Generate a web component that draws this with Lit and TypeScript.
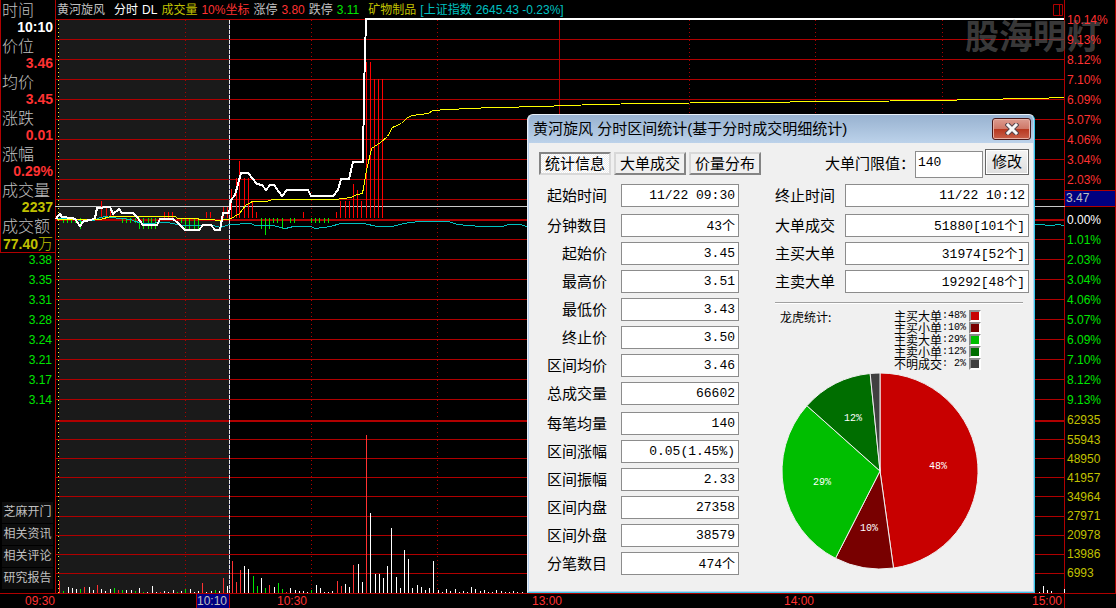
import { LitElement, html, svg, css } from "lit";
import { customElement, state } from "lit/decorators.js";
import { classMap } from "lit/directives/class-map.js";

type Bar = [x: number, y: number, colour?: string];
type Field = { id: string; label: string; value: string; spaced?: boolean };

const range = (from: number, to: number, step: number) => {
  const out: number[] = [];
  for (let v = from; v <= to; v += step) out.push(v);
  return out;
};

/* Price pane and volume pane, in chart units */
const PRICE_GRID = [...range(39, 199, 20), ...range(239, 399, 20)];
const VOLUME_GRID = [439, 458, 477, 496, 516, 535, 554, 573];
const DOTTED = [185, 311, 437, 689, 815, 942];

const PRICE =
  "56,219 58,216 60,214 62,217 72,218 75,219 80,226 84,221 91,220 95,218 97,208 110,207 113,214 119,209 122,213 133,213 137,217 143,225 157,225 160,219 173,219 178,223 185,230 199,230 203,225 211,225 215,230 220,230 223,213 229,213 231,200 235,195 241,173 248,173 257,184 262,185 266,190 270,185 274,185 282,196 287,190 308,190 311,196 333,196 338,190 341,179 349,179 353,162 363,162 364,91 365,55 366,19 1064,19";
const AVERAGE =
  "56,219 100,219 110,216 175,216 177,218 197,218 199,219 213,219 216,220 229,219 234,216 239,213 245,205 252,201 266,201 272,199 335,199 350,197 357,194 362,193 366,170 371,148 380,142 387,136 392,127 401,123 407,117 412,115 428,113 432,110 448,109 469,108 493,107 545,106 562,105 640,103 940,100 974,99 1033,98 1064,97";
const INDEX =
  "56,218 67,218 76,219 82,221 93,220 100,217 105,216 110,217 130,219 135,221 143,223 167,222 182,225 203,225 213,225 220,227 229,224 250,223 255,225 272,225 285,228 293,226 310,226 315,228 330,226 340,223 363,223 377,226 392,226 403,223 418,221 448,221 457,224 480,226 502,226 508,224 520,224 526,226 1035,224 1043,224 1046,225 1053,225 1056,224 1064,225";

const BUY: Bar[] = [
  [101, 201], [106, 208], [110, 208], [113, 214], [164, 212], [168, 212], [172, 212], [206, 212], [210, 212],
  [223, 207], [227, 207], [231, 189], [236, 178], [239, 161], [244, 178], [248, 178], [252, 201], [256, 212],
  [303, 212], [336, 212], [340, 201], [345, 201], [349, 201], [353, 184], [357, 190], [361, 201],
  [366, 62], [370, 62], [374, 79], [378, 79], [382, 79],
];
const SELL: Bar[] = [
  [63, 223], [67, 223], [71, 223], [75, 223], [80, 229], [122, 223], [126, 223], [130, 223], [135, 223],
  [139, 229], [143, 229], [148, 229], [151, 229], [155, 229], [181, 223], [185, 229], [189, 229], [194, 229],
  [198, 229], [261, 229], [265, 235], [269, 229], [273, 223], [277, 223], [282, 229], [290, 223], [294, 223],
  [311, 223], [315, 223], [319, 223], [324, 223], [328, 223],
];
const VOLUME: Bar[] = [
  [59, 581, "r"], [63, 591, "g"], [68, 587], [72, 588], [76, 589], [80, 589, "g"], [84, 587, "r"], [89, 587],
  [93, 590], [97, 585, "r"], [101, 589], [105, 591], [110, 589], [114, 588, "g"], [118, 590, "r"], [122, 590, "g"],
  [126, 590], [131, 590], [135, 591, "g"], [139, 588], [143, 592, "g"], [147, 592], [152, 586], [156, 592],
  [160, 592, "r"], [164, 591], [168, 592], [173, 590], [177, 592, "g"], [181, 591], [185, 589, "g"], [190, 589],
  [194, 592], [198, 591], [202, 583, "r"], [206, 592], [211, 591], [215, 590, "g"], [219, 591], [223, 578, "r"],
  [227, 586], [232, 561, "r"], [236, 582, "r"], [240, 570, "r"], [244, 566], [248, 569], [253, 576, "g"],
  [257, 586, "g"], [261, 578], [265, 588, "g"], [269, 585, "r"], [274, 587], [278, 583, "g"], [282, 589, "g"],
  [286, 592, "r"], [290, 588], [295, 590], [299, 591], [303, 591], [307, 592], [311, 590, "g"], [316, 585],
  [320, 588], [324, 592], [328, 592], [332, 591], [337, 581, "r"], [341, 586, "r"], [345, 584], [349, 587],
  [353, 565, "r"], [358, 564], [362, 582], [366, 435, "r"], [370, 513], [375, 574], [379, 574], [383, 578],
  [387, 566], [391, 528], [396, 577], [400, 588], [404, 550], [408, 559], [412, 588], [417, 585], [421, 587],
  [425, 590], [429, 588], [433, 561], [438, 590], [442, 592], [446, 589], [450, 591], [455, 589], [459, 592],
  [463, 591], [467, 592], [471, 587], [475, 589], [480, 591], [484, 590], [488, 592], [492, 592], [496, 590],
  [501, 591], [505, 592], [509, 592], [513, 591], [517, 592], [522, 592], [1039, 592], [1043, 586], [1047, 590],
  [1051, 591], [1064, 589],
];

@customElement("time-chart")
class TimeChart extends LitElement {
  static styles = css`
    :host { display: block; }
    .plot { display: block; width: 100%; height: 575px; overflow: visible; shape-rendering: crispEdges; }
    .plot line, .plot polyline { vector-effect: non-scaling-stroke; fill: none; }
    .shade { fill: #1a1a1a; }
    .grid { stroke: #b00000; stroke-width: 1; }
    .thick { stroke: #b00000; stroke-width: 2; }
    .dots { stroke: #b00000; stroke-dasharray: 1 3; }
    .open { stroke: #ffff32; stroke-dasharray: 1 3; }
    .cross { stroke: #c8c8c8; }
    .cross-base { stroke: #2a2a80; }
    .cross-dash { stroke: #e8e8e8; stroke-dasharray: 4 1; }
    .price { stroke: #ffffff; stroke-width: 2; }
    .average { stroke: #ffff00; }
    .index { stroke: #00c0c0; }
    .buy { stroke: #ff0000; }
    .sell { stroke: #00e600; }
    .w { stroke: #ffffff; }
    .r { stroke: #ff3232; }
    .g { stroke: #00e600; }
  `;

  private h(y: number, cls = "grid") {
    return svg`<line class=${cls} x1="55" x2="1065" y1=${y + 0.5} y2=${y + 0.5} />`;
  }

  private v(x: number, cls: string, from = 20, to = 593) {
    return svg`<line class=${cls} x1=${x + 0.5} x2=${x + 0.5} y1=${from} y2=${to} />`;
  }

  render() {
    return html`
      <svg class="plot" viewBox="55 19 1010 575" preserveAspectRatio="none" role="img" aria-label="分时走势">
        <rect class="shade" x="59" y="20" width="170" height="573" />
        ${this.h(19)} ${PRICE_GRID.map((y) => this.h(y))} ${VOLUME_GRID.map((y) => this.h(y))} ${this.h(593)}
        <line class="thick" x1="55" x2="1065" y1="220" y2="220" />
        <line class="thick" x1="55" x2="1065" y1="421" y2="421" />
        ${DOTTED.map((x) => this.v(x, "dots"))}
        ${this.v(559, "grid")} ${this.v(55, "grid", 0)} ${this.v(1064, "grid", 0)} ${this.v(58, "open")}
        ${this.h(206, "cross")}
        ${this.v(229, "cross-base")} ${this.v(229, "cross-dash")}
        ${BUY.map(([x, y]) => this.v(x, "buy", y, 218))}
        ${SELL.map(([x, y]) => this.v(x, "sell", 218, y))}
        ${VOLUME.map(([x, y, c]) => this.v(x, c ?? "w", y))}
        <g transform="translate(0.5 0.5)">
          <polyline class="index" points=${INDEX} />
          <polyline class="average" points=${AVERAGE} />
        </g>
        <polyline class="price" points=${PRICE} />
      </svg>
    `;
  }
}

const LEFT_FIELDS: Field[] = [
  { id: "start", label: "起始时间", value: "11/22 09:30", spaced: true },
  { id: "minutes", label: "分钟数目", value: "43个" },
  { id: "open", label: "起始价", value: "3.45" },
  { id: "high", label: "最高价", value: "3.51" },
  { id: "low", label: "最低价", value: "3.43" },
  { id: "close", label: "终止价", value: "3.50" },
  { id: "mean", label: "区间均价", value: "3.46" },
  { id: "volume", label: "总成交量", value: "66602", spaced: true },
  { id: "per", label: "每笔均量", value: "140" },
  { id: "rise", label: "区间涨幅", value: "0.05(1.45%)" },
  { id: "swing", label: "区间振幅", value: "2.33" },
  { id: "inner", label: "区间内盘", value: "27358" },
  { id: "outer", label: "区间外盘", value: "38579" },
  { id: "ticks", label: "分笔数目", value: "474个" },
];

const RIGHT_FIELDS: Field[] = [
  { id: "end", label: "终止时间", value: "11/22 10:12", spaced: true },
  { id: "big", label: "大单成交", value: "51880[101个]" },
  { id: "bigbuy", label: "主买大单", value: "31974[52个]" },
  { id: "bigsell", label: "主卖大单", value: "19292[48个]" },
];

const SLICES = [
  { name: "主买大单", share: 47.8, text: "48%", colour: "#c80000", x: 156, y: 93 },
  { name: "主买小单", share: 9.7, text: "10%", colour: "#780000", x: 87, y: 155 },
  { name: "主卖大单", share: 29.1, text: "29%", colour: "#00be00", x: 40, y: 109 },
  { name: "主卖小单", share: 11.8, text: "12%", colour: "#006e00", x: 71, y: 45 },
  { name: "不明成交", share: 1.6, text: "\u00a02%", colour: "#404040", x: 0, y: 0 },
];

@customElement("stat-dialog")
class StatDialog extends LitElement {
  @state() private tab = 0;

  static styles = css`
    :host { display: block; color: #000; font-family: "Liberation Mono", "Noto Sans CJK SC", monospace; }
    .window { border: 1px solid; border-color: #e8f0f8 #38c8e8 #38c8e8 #e8f0f8; border-radius: 6px 6px 0 0; background: #f0f0f0; }
    .frame { border: 1px solid #b8d2ee; border-top: 0; border-radius: 5px 5px 0 0; overflow: hidden; }
    .title { display: flex; justify-content: space-between; align-items: center; height: 28px; padding: 0 2px 0 4px;
      background: linear-gradient(#98b2d0, #bcd2ea); }
    .title h2 { margin: 0; font: 15px/28px "Liberation Sans", "Noto Sans CJK SC", sans-serif; white-space: nowrap; }
    .close { display: flex; align-items: center; justify-content: center; width: 39px; height: 22px; padding: 0;
      border: 1px solid #4a1818; border-radius: 3px; box-shadow: inset 0 0 0 1px #e8b0a4;
      background: linear-gradient(#dc9c90, #cf7868 48%, #b83820 52%, #c8604a); }
    .body { padding: 6px 4px 11px 10px; }
    .tools { display: flex; align-items: flex-start; justify-content: space-between; height: 35px; }
    .tabs { display: flex; gap: 3px; padding-top: 3px; }
    .tab { width: 72px; height: 23px; padding: 0 0 2px; border: 2px outset #d8d8d8; background: #f0f0f0; color: #000;
      font: 15px/17px "Noto Sans CJK SC", sans-serif; }
    .tab.on { border-style: inset; background: repeating-conic-gradient(#ffffff 0 25%, #eeeeee 0 50%) 0 0 / 2px 2px; }
    .limit { display: flex; align-items: flex-start; font: 15px/27px "Noto Sans CJK SC", sans-serif; }
    .limit .value { width: 68px; height: 27px; margin: 2px 2px 0 0; padding: 0 2px 4px; text-align: left; }
    .apply { width: 44px; height: 26px; padding: 0 0 2px; border: 1px solid #666; box-shadow: inset 0 0 0 1px #fff;
      background: linear-gradient(#f4f4f4, #dedede); color: #000; font: 15px/20px "Noto Sans CJK SC", sans-serif; }
    .columns { display: flex; gap: 36px; }
    .left { width: 200px; }
    .right { flex: 1; min-width: 0; }
    .field { display: flex; height: 23px; margin-bottom: 5px; }
    .field.spaced { margin-bottom: 7px; }
    .field label { flex: none; font: 15px/21px "Noto Sans CJK SC", sans-serif; }
    .left .field { gap: 14px; }
    .left .field label { width: 68px; text-align: right; }
    .right .field { gap: 10px; }
    .value { box-sizing: border-box; flex: 1; min-width: 0; height: 23px; margin: 0; padding: 0 3px; border: 1px solid #8c8c8c;
      border-radius: 0; background: #fff; color: #000; font: 13px/19px "Liberation Mono", "Noto Sans CJK SC", monospace;
      text-align: right; }
    .value.counted { padding-bottom: 2px; }
    .rule { height: 0; margin: 9px 6px 6px 0; border: 0; border-top: 1px solid #a0a0a0; border-bottom: 1px solid #fff; }
    .share { display: flex; justify-content: space-between; padding: 0 48px 0 5px; font: 12px/14px "Noto Sans CJK SC", sans-serif; }
    .legend { margin: 0; padding: 0; list-style: none; }
    .legend li { display: flex; align-items: center; height: 12px; white-space: nowrap; }
    .pct { font: 10px/12px "Liberation Mono", monospace; }
    .swatch { box-sizing: border-box; width: 12px; height: 12px; margin-left: 3px; border: 2px solid;
      border-color: #8c8c8c #fff #fff #8c8c8c; }
    .pie { display: block; width: 196px; height: 196px; margin: 3px 0 0 7px; overflow: visible; }
    .pie path { stroke: #f0f0f0; stroke-width: 1; }
    .pie text { fill: #fff; font: 10px "Liberation Mono", monospace; text-anchor: middle; dominant-baseline: central; }
  `;

  private field(f: Field) {
    return html`
      <div class=${classMap({ field: true, spaced: !!f.spaced })}>
        <label for=${f.id}>${f.label}</label>
        <input class=${classMap({ value: true, counted: f.value.includes("个") })} id=${f.id} readonly .value=${f.value} />
      </div>
    `;
  }

  private pie() {
    const c = 98;
    const r = 98;
    let sum = 0;
    const at = (share: number) => {
      const a = (share / 100) * 2 * Math.PI;
      return `${(c + r * Math.sin(a)).toFixed(2)} ${(c - r * Math.cos(a)).toFixed(2)}`;
    };
    return SLICES.map((s) => {
      const from = at(sum);
      sum += s.share;
      return svg`<path fill=${s.colour} d=${`M${c} ${c} L${from} A${r} ${r} 0 0 1 ${at(sum)} Z`} />`;
    });
  }

  render() {
    return html`
      <section class="window" role="dialog" aria-labelledby="title">
        <div class="frame">
          <header class="title">
            <h2 id="title">黄河旋风 分时区间统计(基于分时成交明细统计)</h2>
            <button class="close" aria-label="关闭">
              <svg width="14" height="12" viewBox="0 0 14 12">
                <path d="M3 2 L11 10 M11 2 L3 10" stroke="#56444c" stroke-width="5" stroke-linecap="square" />
                <path d="M3 2 L11 10 M11 2 L3 10" stroke="#f8f8f8" stroke-width="3" stroke-linecap="square" />
              </svg>
            </button>
          </header>
          <div class="body">
            <div class="tools">
              <div class="tabs">
                ${["统计信息", "大单成交", "价量分布"].map(
                  (t, i) => html`<button class=${classMap({ tab: true, on: this.tab === i })}
                    @click=${() => (this.tab = i)}>${t}</button>`
                )}
              </div>
              <div class="limit">
                <label for="limit">大单门限值：</label>
                <input class="value" id="limit" value="140" />
                <button class="apply">修改</button>
              </div>
            </div>
            <div class="columns">
              <div class="left">${LEFT_FIELDS.map((f) => this.field(f))}</div>
              <div class="right">
                ${RIGHT_FIELDS.map((f) => this.field(f))}
                <hr class="rule" />
                <div class="share">
                  <span>龙虎统计:</span>
                  <ul class="legend">
                    ${SLICES.map(
                      (s) => html`<li>${s.name}<span class="pct">:${s.text}</span>
                        <span class="swatch" style="background:${s.colour}"></span></li>`
                    )}
                  </ul>
                </div>
                <svg class="pie" viewBox="0 0 196 196" role="img" aria-label="龙虎统计">
                  ${this.pie()}
                  ${SLICES.filter((s) => s.x).map((s) => svg`<text x=${s.x} y=${s.y}>${s.text}</text>`)}
                </svg>
              </div>
            </div>
          </div>
        </div>
      </section>
    `;
  }
}

@customElement("app-root")
class AppRoot extends LitElement {
  static styles = css`
    :host { display: block; position: relative; min-height: 100vh; overflow: hidden; background: #000; color: #c0c0c0;
      font: 12px/14px "Liberation Sans", "Noto Sans CJK SC", sans-serif; }
    .shell { display: grid; grid-template-columns: 55px 1fr 51px; grid-template-rows: 19px auto 14px; }
    .side { grid-row: 1 / 3; display: flex; flex-direction: column; border-bottom: 1px solid #b00000; }
    .quote { margin: 0; border: solid #b00000; border-width: 0 0 1px 1px; }
    .quote dt, .quote dd { height: 18px; margin: 0; white-space: nowrap; }
    .quote dt { padding-left: 1px; font: 300 16px/18px "Noto Sans CJK SC", sans-serif; }
    .quote dd { padding-right: 2px; font-weight: bold; font-size: 14px; line-height: 18px; text-align: right; }
    .unit { font: 300 15px/18px "Noto Sans CJK SC", sans-serif; }
    .prices { display: flex; flex-direction: column; gap: 8px; padding: 1px 3px 0 0; line-height: 12px; text-align: right; }
    .links { display: flex; flex-direction: column; gap: 1px; margin: auto 2px 4px; }
    .links button { height: 21px; padding: 0 0 4px; border: 0; background: #0d0d0d; color: #c0c0c0;
      font: 12px/16px "Noto Sans CJK SC", sans-serif; white-space: nowrap; }
    .head { display: flex; align-items: center; gap: 4px; padding: 0 2px; white-space: nowrap; }
    .gap { margin-left: 5px; }
    .pane { margin-left: auto; }
    .scale { position: relative; z-index: 1; grid-column: 3; grid-row: 1 / 3; border: solid #b00000; border-width: 0 1px 1px 0;
      padding: 10px 0 0 2px; }
    .tick { height: 20px; line-height: 20px; }
    .vol { height: 19px; line-height: 19px; color: #c0c000; }
    .vol.first { height: 21px; line-height: 21px; }
    .tag { box-sizing: border-box; height: 17px; margin: 0 0 3px -2px; padding-left: 1px; border: solid #b00000; border-width: 1px 0;
      background: #000080; line-height: 15px; }
    .times { grid-column: 1 / 4; display: grid; grid-template-columns: 55px 141fr 81fr 255fr 252fr 248fr 33px 51px;
      color: #ff3232; line-height: 14px; }
    .first-time { text-align: right; }
    .now { grid-column: 3; justify-self: start; width: 32px; border: solid #b00000; border-width: 0 1px; background: #000080;
      color: #c0c0c0; }
    .t1030 { grid-column: 4; }
    .close-line { grid-column: 7; border-right: 1px solid #b00000; }
    .red { color: #ff3232; }
    .green { color: #00e600; }
    .white { color: #fff; }
    .yellow { color: #c0c000; }
    .cyan { color: #00c0c0; }
    .mark { position: absolute; top: 11px; right: 15px; color: rgb(90 90 90 / 65%); pointer-events: none;
      font: bold 34px/48px "Noto Sans CJK SC", sans-serif; }
    .dialog { position: absolute; top: 114px; left: 527px; width: 508px; }
  `;

  render() {
    const quote: [string, string, string][] = [
      ["时间", "10:10", "white"],
      ["价位", "3.46", "red"],
      ["均价", "3.45", "red"],
      ["涨跌", "0.01", "red"],
      ["涨幅", "0.29%", "red"],
      ["成交量", "2237", "yellow"],
    ];
    const up = ["10.14%", "9.13%", "8.12%", "7.10%", "6.09%", "5.07%", "4.06%", "3.04%", "2.03%"];
    const down = ["1.01%", "2.03%", "3.04%", "4.06%", "5.07%", "6.09%", "7.10%", "8.12%", "9.13%"];
    const volumes = ["62935", "55943", "48950", "41957", "34964", "27971", "20978", "13986", "6993"];
    return html`
      <main class="shell">
        <aside class="side">
          <dl class="quote">
            ${quote.map(([k, v, c]) => html`<dt>${k}</dt><dd class=${c}>${v}</dd>`)}
            <dt>成交额</dt>
            <dd class="yellow">77.40<span class="unit">万</span></dd>
          </dl>
          <div class="prices green">
            ${["3.38", "3.35", "3.31", "3.28", "3.24", "3.21", "3.17", "3.14"].map((p) => html`<span>${p}</span>`)}
          </div>
          <nav class="links">
            ${["芝麻开门", "相关资讯", "相关评论", "研究报告"].map((t) => html`<button>${t}</button>`)}
          </nav>
        </aside>
        <header class="head">
          <span>黄河旋风</span><span class="white gap">分时</span><span class="white">DL</span>
          <span class="yellow">成交量</span><span class="red">10%坐标</span>
          <span>涨停</span><span class="red">3.80</span><span>跌停</span><span class="green">3.11</span>
          <span class="yellow gap">矿物制品</span><span class="cyan">[上证指数</span>
          <span class="cyan">2645.43 -0.23%]</span>
          <svg class="pane" width="10" height="12" viewBox="0 0 10 12" fill="none" stroke="#b00000">
            <path d="M0.5 0.5h9v11h-9z M6.5 0.5v11" />
          </svg>
        </header>
        <time-chart></time-chart>
        <div class="scale">
          ${up.map((t) => html`<div class="tick red">${t}</div>`)}
          <div class="tag">3.47</div>
          <div class="tick white">0.00%</div>
          ${down.map((t) => html`<div class="tick green">${t}</div>`)}
          ${volumes.map((t, i) => html`<div class=${classMap({ vol: true, first: i === 0 })}>${t}</div>`)}
        </div>
        <footer class="times">
          <span class="first-time">09:30</span>
          <span class="now">10:10</span>
          <span class="t1030">10:30</span>
          <span>13:00</span>
          <span>14:00</span>
          <span class="close-line">15:00</span>
        </footer>
      </main>
      <div class="mark">股海明灯</div>
      <stat-dialog class="dialog"></stat-dialog>
    `;
  }
}
